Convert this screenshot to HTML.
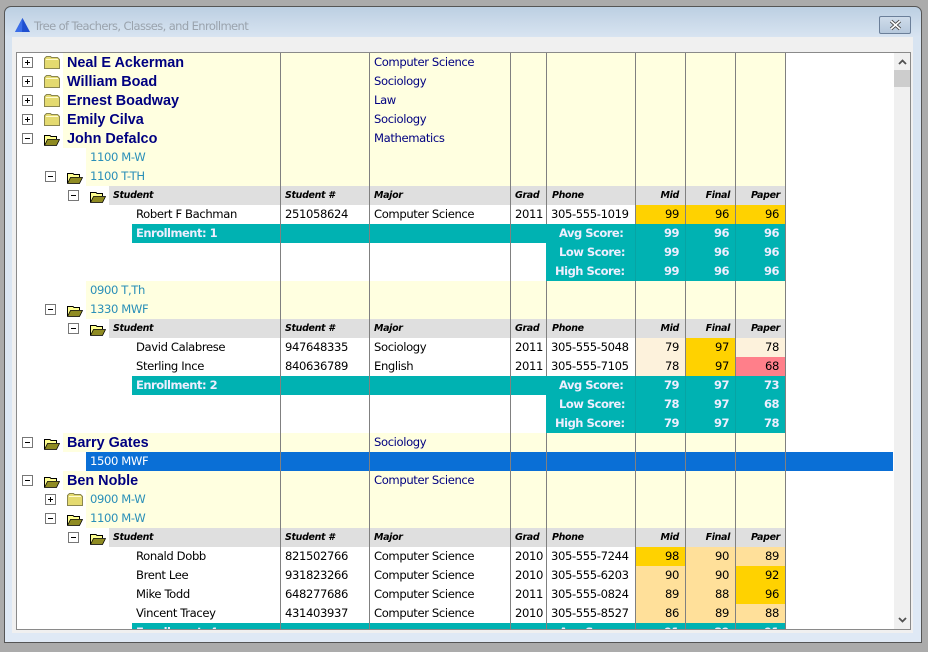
<!DOCTYPE html>
<html><head><meta charset="utf-8"><style>
html,body{margin:0;padding:0;width:928px;height:652px;overflow:hidden;background:#ababab}
*{box-sizing:border-box}
#win{position:absolute;left:4px;top:6px;width:918px;height:637px;border:1px solid #555;border-radius:7px 7px 0 0;background:linear-gradient(#bccfe2 0,#d8e4f1 30px,#dfe9f5 100%)}
#title{position:absolute;left:34px;top:19px;font:11.5px/14px "DejaVu Sans",sans-serif;color:#9aa3ad;letter-spacing:-.6px;white-space:nowrap}
#client{position:absolute;left:12px;top:37px;width:901px;height:596px;background:#f0f0f0}
#close{position:absolute;left:879px;top:16px;width:32px;height:18px;border:1px solid #6b7f99;border-radius:2px;background:linear-gradient(#cfdcea,#b6c8dc)}
#tree{position:absolute;left:16px;top:52px;width:895px;height:578px;border:1px solid #8a8a8a;background:#fff;overflow:hidden}
#sb{position:absolute;left:877px;top:0;width:17px;height:576px;background:#f0f0f0}
#th{position:absolute;left:0;top:17px;width:16px;height:17px;background:#cdcdcd}
#g{position:absolute;left:-17px;top:-53px;width:928px;height:640px;font:11.6px/19px "DejaVu Sans",sans-serif;color:#000;letter-spacing:-.38px}
#g div{position:absolute;height:19px;white-space:nowrap}
.y{background:#ffffe0;left:63px;width:722px}
.y1{background:#ffffe0;left:86px;width:699px}
.h{background:#dfdfdf;left:109px;width:676px}
.e{background:#00b2b2;left:132px;width:653px}
.t{background:#00b2b2;left:546px;width:239px;height:57px!important}
.v{position:absolute;width:1px;top:53px;height:576px;background:#808080}
.l{position:absolute;width:1px;background:#06a4a4;height:57px}
#g .n{font:bold 14.4px/20px "Liberation Sans",sans-serif;color:#000080;left:67px;letter-spacing:0}
.c{color:#2a8fb8;left:90px}
.m{color:#000080;left:374px}
#g .b{font:italic bold 9.5px/20px "DejaVu Sans",sans-serif;letter-spacing:-.35px}
#g .w{font:bold 11.5px/19px "DejaVu Sans",sans-serif;color:#eef;letter-spacing:-.5px}
.s{width:50px;text-align:right;padding-right:6px}
.sq{position:absolute;width:11px;height:11px;border:1px solid #777;background:#fff}
.sq:before{content:"";position:absolute;left:2px;top:4px;width:5px;height:1px;background:#000}
.p:after{content:"";position:absolute;left:4px;top:2px;width:1px;height:5px;background:#000}
svg{position:absolute;overflow:visible}
</style></head><body>
<svg width="0" height="0" style="position:absolute"><defs>
<symbol id="cf" viewBox="0 0 16 13"><path d="M.5 12.5 V2.5 L2.5 .5 H6.5 L7.5 1.5 H13.5 L15.5 3.5 V12.5 Z" fill="#e4da70" stroke="#8a8650" stroke-width="1"/><path d="M2 3.5 H14" stroke="#fffbd0"/></symbol>
<symbol id="of" viewBox="0 0 16 11"><path d="M.5 10 V.5 H6 L7 1.5 H12.5 V4" fill="#ffff90" stroke="#000" stroke-width="1"/><path d="M.5 10.5 L3.5 4.5 H15.5 L12.5 10.5 Z" fill="#8f8b22" stroke="#000" stroke-width=".8"/></symbol>
</defs></svg>
<div id="win"></div>
<svg style="left:14px;top:17px" width="17" height="16"><path d="M8.5 1 L16 15 H1 Z" fill="#1f4fd0"/><path d="M8.5 1 L1 15 H8 Z" fill="#3a6de8"/></svg>
<div id="title">Tree of Teachers, Classes, and Enrollment</div>
<div id="client"></div>
<div id="close"><svg style="left:9px;top:3px" width="13" height="10"><path d="M2 1 L11 9 M11 1 L2 9" stroke="#444" stroke-width="3.4"/><path d="M2 1 L11 9 M11 1 L2 9" stroke="#fff" stroke-width="1.6"/></svg></div>
<div id="tree">
<div id="g">
<div class="y" style="top:53px"></div><div class="y" style="top:72px"></div><div class="y" style="top:91px"></div><div class="y" style="top:110px"></div><div class="y" style="top:129px"></div>
<div class="y1" style="top:148px"></div><div class="y1" style="top:167px"></div>
<div class="h" style="top:186px"></div>
<div class="e" style="top:224px"></div><div class="t" style="top:224px"></div>
<div class="y1" style="top:281px"></div><div class="y1" style="top:300px"></div>
<div class="h" style="top:319px"></div>
<div class="e" style="top:376px"></div><div class="t" style="top:376px"></div>
<div class="y" style="top:433px"></div>
<div style="top:452px;left:86px;width:807px;background:#0a6fd6"></div>
<div class="y" style="top:471px"></div><div class="y1" style="top:490px"></div><div class="y1" style="top:509px"></div>
<div class="h" style="top:528px"></div>
<div class="e" style="top:623px"></div>

<div style="top:205px;left:635px;width:50px;background:#ffd200"></div><div style="top:205px;left:685px;width:50px;background:#ffd200"></div><div style="top:205px;left:735px;width:50px;background:#ffd200"></div>
<div style="top:338px;left:635px;width:50px;background:#fdf2dc"></div><div style="top:338px;left:685px;width:50px;background:#ffd200"></div><div style="top:338px;left:735px;width:50px;background:#fdf2dc"></div>
<div style="top:357px;left:635px;width:50px;background:#fdf2dc"></div><div style="top:357px;left:685px;width:50px;background:#ffd200"></div><div style="top:357px;left:735px;width:50px;background:#ff7f8a"></div>
<div style="top:547px;left:635px;width:50px;background:#ffd200"></div><div style="top:547px;left:685px;width:100px;background:#ffe09a"></div>
<div style="top:566px;left:635px;width:100px;background:#ffe09a"></div><div style="top:566px;left:735px;width:50px;background:#ffd200"></div>
<div style="top:585px;left:635px;width:100px;background:#ffe09a"></div><div style="top:585px;left:735px;width:50px;background:#ffd200"></div>
<div style="top:604px;left:635px;width:150px;background:#ffe09a"></div>

<span class="v" style="left:280px"></span><span class="v" style="left:369px"></span><span class="v" style="left:510px"></span><span class="v" style="left:546px"></span><span class="v" style="left:635px"></span><span class="v" style="left:685px"></span><span class="v" style="left:735px"></span><span class="v" style="left:785px"></span>
<div class="t" style="top:224px;background:#00b2b2"></div><div class="t" style="top:376px;background:#00b2b2"></div>
<span class="l" style="left:635px;top:224px"></span><span class="l" style="left:685px;top:224px"></span><span class="l" style="left:735px;top:224px"></span>
<span class="l" style="left:635px;top:376px"></span><span class="l" style="left:685px;top:376px"></span><span class="l" style="left:735px;top:376px"></span>

<span class="sq p" style="left:22px;top:57px"></span><svg style="left:44px;top:56px" width="16" height="13"><use href="#cf"/></svg><div class="n" style="top:53px">Neal E Ackerman</div><div class="m" style="top:53px">Computer Science</div>
<span class="sq p" style="left:22px;top:76px"></span><svg style="left:44px;top:75px" width="16" height="13"><use href="#cf"/></svg><div class="n" style="top:72px">William Boad</div><div class="m" style="top:72px">Sociology</div>
<span class="sq p" style="left:22px;top:95px"></span><svg style="left:44px;top:94px" width="16" height="13"><use href="#cf"/></svg><div class="n" style="top:91px">Ernest Boadway</div><div class="m" style="top:91px">Law</div>
<span class="sq p" style="left:22px;top:114px"></span><svg style="left:44px;top:113px" width="16" height="13"><use href="#cf"/></svg><div class="n" style="top:110px">Emily Cilva</div><div class="m" style="top:110px">Sociology</div>
<span class="sq" style="left:22px;top:133px"></span><svg style="left:44px;top:135px" width="16" height="11"><use href="#of"/></svg><div class="n" style="top:129px">John Defalco</div><div class="m" style="top:129px">Mathematics</div>
<div class="c" style="top:148px">1100 M-W</div>
<span class="sq" style="left:45px;top:171px"></span><svg style="left:67px;top:173px" width="16" height="11"><use href="#of"/></svg><div class="c" style="top:167px">1100 T-TH</div>

<span class="sq" style="left:68px;top:190px"></span><svg style="left:90px;top:192px" width="16" height="11"><use href="#of"/></svg>
<div class="b" style="top:186px;left:113px">Student</div><div class="b" style="top:186px;left:285px">Student #</div><div class="b" style="top:186px;left:374px">Major</div><div class="b" style="top:186px;left:515px">Grad</div><div class="b" style="top:186px;left:552px">Phone</div><div class="b s" style="top:186px;left:635px">Mid</div><div class="b s" style="top:186px;left:685px;padding-right:5px">Final</div><div class="b s" style="top:186px;left:735px;padding-right:5px">Paper</div>
<div style="top:205px;left:136px">Robert F Bachman</div><div style="top:205px;left:285px">251058624</div><div style="top:205px;left:374px">Computer Science</div><div style="top:205px;left:515px">2011</div><div style="top:205px;left:551px">305-555-1019</div><div class="s" style="top:205px;left:635px">99</div><div class="s" style="top:205px;left:685px">96</div><div class="s" style="top:205px;left:735px">96</div>
<div class="w" style="top:224px;left:136px">Enrollment: 1</div><div class="w" style="top:224px;left:559px">Avg Score:</div><div class="w s" style="top:224px;left:635px">99</div><div class="w s" style="top:224px;left:685px">96</div><div class="w s" style="top:224px;left:735px">96</div>
<div class="w" style="top:243px;left:559px">Low Score:</div><div class="w s" style="top:243px;left:635px">99</div><div class="w s" style="top:243px;left:685px">96</div><div class="w s" style="top:243px;left:735px">96</div>
<div class="w" style="top:262px;left:555px">High Score:</div><div class="w s" style="top:262px;left:635px">99</div><div class="w s" style="top:262px;left:685px">96</div><div class="w s" style="top:262px;left:735px">96</div>

<div class="c" style="top:281px">0900 T,Th</div>
<span class="sq" style="left:45px;top:304px"></span><svg style="left:67px;top:306px" width="16" height="11"><use href="#of"/></svg><div class="c" style="top:300px">1330 MWF</div>

<span class="sq" style="left:68px;top:323px"></span><svg style="left:90px;top:325px" width="16" height="11"><use href="#of"/></svg>
<div class="b" style="top:319px;left:113px">Student</div><div class="b" style="top:319px;left:285px">Student #</div><div class="b" style="top:319px;left:374px">Major</div><div class="b" style="top:319px;left:515px">Grad</div><div class="b" style="top:319px;left:552px">Phone</div><div class="b s" style="top:319px;left:635px">Mid</div><div class="b s" style="top:319px;left:685px;padding-right:5px">Final</div><div class="b s" style="top:319px;left:735px;padding-right:5px">Paper</div>
<div style="top:338px;left:136px">David Calabrese</div><div style="top:338px;left:285px">947648335</div><div style="top:338px;left:374px">Sociology</div><div style="top:338px;left:515px">2011</div><div style="top:338px;left:551px">305-555-5048</div><div class="s" style="top:338px;left:635px">79</div><div class="s" style="top:338px;left:685px">97</div><div class="s" style="top:338px;left:735px">78</div>
<div style="top:357px;left:136px">Sterling Ince</div><div style="top:357px;left:285px">840636789</div><div style="top:357px;left:374px">English</div><div style="top:357px;left:515px">2011</div><div style="top:357px;left:551px">305-555-7105</div><div class="s" style="top:357px;left:635px">78</div><div class="s" style="top:357px;left:685px">97</div><div class="s" style="top:357px;left:735px">68</div>
<div class="w" style="top:376px;left:136px">Enrollment: 2</div><div class="w" style="top:376px;left:559px">Avg Score:</div><div class="w s" style="top:376px;left:635px">79</div><div class="w s" style="top:376px;left:685px">97</div><div class="w s" style="top:376px;left:735px">73</div>
<div class="w" style="top:395px;left:559px">Low Score:</div><div class="w s" style="top:395px;left:635px">78</div><div class="w s" style="top:395px;left:685px">97</div><div class="w s" style="top:395px;left:735px">68</div>
<div class="w" style="top:414px;left:555px">High Score:</div><div class="w s" style="top:414px;left:635px">79</div><div class="w s" style="top:414px;left:685px">97</div><div class="w s" style="top:414px;left:735px">78</div>

<span class="sq" style="left:22px;top:437px"></span><svg style="left:44px;top:439px" width="16" height="11"><use href="#of"/></svg><div class="n" style="top:433px">Barry Gates</div><div class="m" style="top:433px">Sociology</div>
<div style="top:452px;left:90px;color:#fff">1500 MWF</div>
<span class="sq" style="left:22px;top:475px"></span><svg style="left:44px;top:477px" width="16" height="11"><use href="#of"/></svg><div class="n" style="top:471px">Ben Noble</div><div class="m" style="top:471px">Computer Science</div>
<span class="sq p" style="left:45px;top:494px"></span><svg style="left:67px;top:493px" width="16" height="13"><use href="#cf"/></svg><div class="c" style="top:490px">0900 M-W</div>
<span class="sq" style="left:45px;top:513px"></span><svg style="left:67px;top:515px" width="16" height="11"><use href="#of"/></svg><div class="c" style="top:509px">1100 M-W</div>

<span class="sq" style="left:68px;top:532px"></span><svg style="left:90px;top:534px" width="16" height="11"><use href="#of"/></svg>
<div class="b" style="top:528px;left:113px">Student</div><div class="b" style="top:528px;left:285px">Student #</div><div class="b" style="top:528px;left:374px">Major</div><div class="b" style="top:528px;left:515px">Grad</div><div class="b" style="top:528px;left:552px">Phone</div><div class="b s" style="top:528px;left:635px">Mid</div><div class="b s" style="top:528px;left:685px;padding-right:5px">Final</div><div class="b s" style="top:528px;left:735px;padding-right:5px">Paper</div>
<div style="top:547px;left:136px">Ronald Dobb</div><div style="top:547px;left:285px">821502766</div><div style="top:547px;left:374px">Computer Science</div><div style="top:547px;left:515px">2010</div><div style="top:547px;left:551px">305-555-7244</div><div class="s" style="top:547px;left:635px">98</div><div class="s" style="top:547px;left:685px">90</div><div class="s" style="top:547px;left:735px">89</div>
<div style="top:566px;left:136px">Brent Lee</div><div style="top:566px;left:285px">931823266</div><div style="top:566px;left:374px">Computer Science</div><div style="top:566px;left:515px">2010</div><div style="top:566px;left:551px">305-555-6203</div><div class="s" style="top:566px;left:635px">90</div><div class="s" style="top:566px;left:685px">90</div><div class="s" style="top:566px;left:735px">92</div>
<div style="top:585px;left:136px">Mike Todd</div><div style="top:585px;left:285px">648277686</div><div style="top:585px;left:374px">Computer Science</div><div style="top:585px;left:515px">2011</div><div style="top:585px;left:551px">305-555-0824</div><div class="s" style="top:585px;left:635px">89</div><div class="s" style="top:585px;left:685px">88</div><div class="s" style="top:585px;left:735px">96</div>
<div style="top:604px;left:136px">Vincent Tracey</div><div style="top:604px;left:285px">431403937</div><div style="top:604px;left:374px">Computer Science</div><div style="top:604px;left:515px">2010</div><div style="top:604px;left:551px">305-555-8527</div><div class="s" style="top:604px;left:635px">86</div><div class="s" style="top:604px;left:685px">89</div><div class="s" style="top:604px;left:735px">88</div>
<div class="w" style="top:623px;left:136px">Enrollment: 4</div><div class="w" style="top:623px;left:559px">Avg Score:</div><div class="w s" style="top:623px;left:635px">91</div><div class="w s" style="top:623px;left:685px">89</div><div class="w s" style="top:623px;left:735px">91</div>
</div>
<div id="sb"><div id="th"></div>
<svg style="left:4px;top:6px" width="9" height="6"><path d="M1 5 L4.5 1.5 L8 5" fill="none" stroke="#505050" stroke-width="1.8"/></svg>
<svg style="left:4px;top:564px" width="9" height="6"><path d="M1 1 L4.5 4.5 L8 1" fill="none" stroke="#505050" stroke-width="1.8"/></svg>
</div>
</div>
</body></html>
